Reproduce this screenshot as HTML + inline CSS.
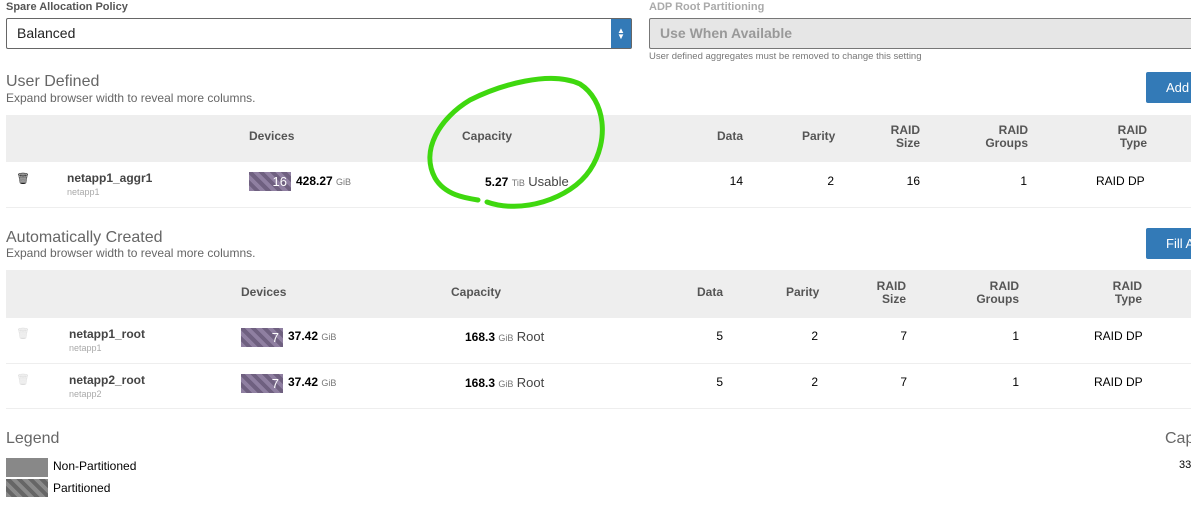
<!DOCTYPE html>
<html><head><meta charset="utf-8"><style>
*{margin:0;padding:0;box-sizing:border-box}
body{width:1191px;height:530px;overflow:hidden;background:#fff;font-family:"Liberation Sans",Arial,sans-serif;position:relative;color:#333}
.a{position:absolute;white-space:nowrap}
.lbl{font-size:11px;font-weight:bold;color:#555}
.h{font-size:16px;color:#666}
.sub{font-size:12px;color:#666}
.btn{background:#337ab7;color:#fff;font-size:13px;border-radius:2px 0 0 2px;padding:0 0 0 20px;line-height:31px;height:31px;width:50px}
.thead{background:#eee;left:6px;width:1185px}
.th{font-size:12px;font-weight:bold;color:#555;line-height:13px}
.row{left:6px;width:1185px;border-bottom:1px solid #eee}
.nm{font-size:12px;font-weight:bold;color:#444}
.sm{font-size:9px;color:#aaa}
.bar{height:19px;width:42px;background:repeating-linear-gradient(45deg,#8f7fa1 0 4px,#6f6080 4px 8px);color:#fff;font-size:13px;text-align:right;padding-right:4px;line-height:19px}
.v{font-size:12px;color:#000}
.b{font-weight:bold}
.u{font-size:9px;color:#777;font-weight:normal}
.w{font-size:13px;color:#444}
.r{text-align:right}
</style></head><body>
<div class="a lbl" style="left:6px;top:1px">Spare Allocation Policy</div>
<div class="a" style="left:6px;top:18px;width:626px;height:31px;border:1px solid #666;border-radius:2px"></div>
<div class="a" style="left:17px;top:25px;font-size:14px;color:#222">Balanced</div>
<div class="a" style="left:611px;top:19px;width:20px;height:29px;background:#337ab7;color:#fff;font-size:8px;text-align:center;line-height:6px;padding-top:9px">▲<br>▼</div>
<div class="a lbl" style="left:649px;top:1px;color:#aaa">ADP Root Partitioning</div>
<div class="a" style="left:649px;top:18px;width:560px;height:31px;border:1px solid #777;background:#e6e6e6;border-radius:2px"></div>
<div class="a" style="left:660px;top:25px;font-size:14px;font-weight:bold;color:#999">Use When Available</div>
<div class="a" style="left:649px;top:51px;font-size:9.5px;color:#777">User defined aggregates must be removed to change this setting</div>

<div class="a h" style="left:6px;top:73px">User Defined</div>
<div class="a sub" style="left:6px;top:91px">Expand browser width to reveal more columns.</div>
<div class="a btn" style="left:1146px;top:72px">Add</div>
<div class="a thead" style="top:115px;height:47px"></div>
<div class="a th" style="left:249px;top:130px">Devices</div>
<div class="a th" style="left:462px;top:130px">Capacity</div>
<div class="a th" style="left:717px;top:130px">Data</div>
<div class="a th" style="left:802px;top:130px">Parity</div>
<div class="a th r" style="left:880px;top:124px;width:40px">RAID<br>Size</div>
<div class="a th r" style="left:970px;top:124px;width:58px">RAID<br>Groups</div>
<div class="a th r" style="left:1100px;top:124px;width:47px">RAID<br>Type</div>
<div class="a row" style="top:162px;height:46px"></div>
<div class="a" style="left:16px;top:172px;font-size:11px;color:#222">🗑</div>
<div class="a nm" style="left:67px;top:171px">netapp1_aggr1</div>
<div class="a sm" style="left:67px;top:187px">netapp1</div>
<div class="a bar" style="left:249px;top:172px">16</div>
<div class="a v b" style="left:296px;top:174px">428.27 <span class="u">GiB</span></div>
<div class="a v" style="left:485px;top:174px"><b>5.27</b> <span class="u">TiB</span> <span class="w">Usable</span></div>
<div class="a v r" style="left:700px;top:174px;width:43px">14</div>
<div class="a v r" style="left:800px;top:174px;width:34px">2</div>
<div class="a v r" style="left:890px;top:174px;width:30px">16</div>
<div class="a v r" style="left:990px;top:174px;width:37px">1</div>
<div class="a v" style="left:1096px;top:174px">RAID DP</div>

<svg class="a" style="left:0;top:0" width="1191" height="530"><path d="M487 202 C520 214,570 200,590 170 C610 140,605 100,580 84 C550 70,500 85,470 100 C440 118,420 150,435 178 C445 195,465 198,478 200" fill="none" stroke="#3fd80f" stroke-width="5" stroke-linecap="round"/></svg>

<div class="a h" style="left:6px;top:229px">Automatically Created</div>
<div class="a sub" style="left:6px;top:246px">Expand browser width to reveal more columns.</div>
<div class="a btn" style="left:1146px;top:228px;padding-left:20px">Fill All</div>
<div class="a thead" style="top:270px;height:48px"></div>
<div class="a th" style="left:241px;top:286px">Devices</div>
<div class="a th" style="left:451px;top:286px">Capacity</div>
<div class="a th" style="left:697px;top:286px">Data</div>
<div class="a th" style="left:786px;top:286px">Parity</div>
<div class="a th r" style="left:866px;top:280px;width:40px">RAID<br>Size</div>
<div class="a th r" style="left:960px;top:280px;width:59px">RAID<br>Groups</div>
<div class="a th r" style="left:1095px;top:280px;width:47px">RAID<br>Type</div>

<div class="a row" style="top:318px;height:46px"></div>
<div class="a" style="left:16px;top:327px;font-size:11px;color:#ddd">🗑</div>
<div class="a nm" style="left:69px;top:327px">netapp1_root</div>
<div class="a sm" style="left:69px;top:343px">netapp1</div>
<div class="a bar" style="left:241px;top:328px">7</div>
<div class="a v b" style="left:288px;top:329px">37.42 <span class="u">GiB</span></div>
<div class="a v" style="left:465px;top:329px"><b>168.3</b> <span class="u">GiB</span> <span class="w">Root</span></div>
<div class="a v r" style="left:700px;top:329px;width:23px">5</div>
<div class="a v r" style="left:790px;top:329px;width:28px">2</div>
<div class="a v r" style="left:880px;top:329px;width:27px">7</div>
<div class="a v r" style="left:990px;top:329px;width:29px">1</div>
<div class="a v" style="left:1094px;top:329px">RAID DP</div>

<div class="a row" style="top:364px;height:45px"></div>
<div class="a" style="left:16px;top:373px;font-size:11px;color:#ddd">🗑</div>
<div class="a nm" style="left:69px;top:373px">netapp2_root</div>
<div class="a sm" style="left:69px;top:389px">netapp2</div>
<div class="a bar" style="left:241px;top:374px">7</div>
<div class="a v b" style="left:288px;top:375px">37.42 <span class="u">GiB</span></div>
<div class="a v" style="left:465px;top:375px"><b>168.3</b> <span class="u">GiB</span> <span class="w">Root</span></div>
<div class="a v r" style="left:700px;top:375px;width:23px">5</div>
<div class="a v r" style="left:790px;top:375px;width:28px">2</div>
<div class="a v r" style="left:880px;top:375px;width:27px">7</div>
<div class="a v r" style="left:990px;top:375px;width:29px">1</div>
<div class="a v" style="left:1094px;top:375px">RAID DP</div>

<div class="a h" style="left:6px;top:430px">Legend</div>
<div class="a" style="left:6px;top:458px;width:42px;height:19px;background:#888"></div>
<div class="a" style="left:6px;top:479px;width:42px;height:18px;background:repeating-linear-gradient(45deg,#8a8a8a 0 4px,#666 4px 8px)"></div>
<div class="a v" style="left:53px;top:459px">Non-Partitioned</div>
<div class="a v" style="left:53px;top:481px">Partitioned</div>
<div class="a h" style="left:1165px;top:430px">Capacity</div>
<div class="a v" style="left:1179px;top:459px;font-size:11px">336</div>
</body></html>
